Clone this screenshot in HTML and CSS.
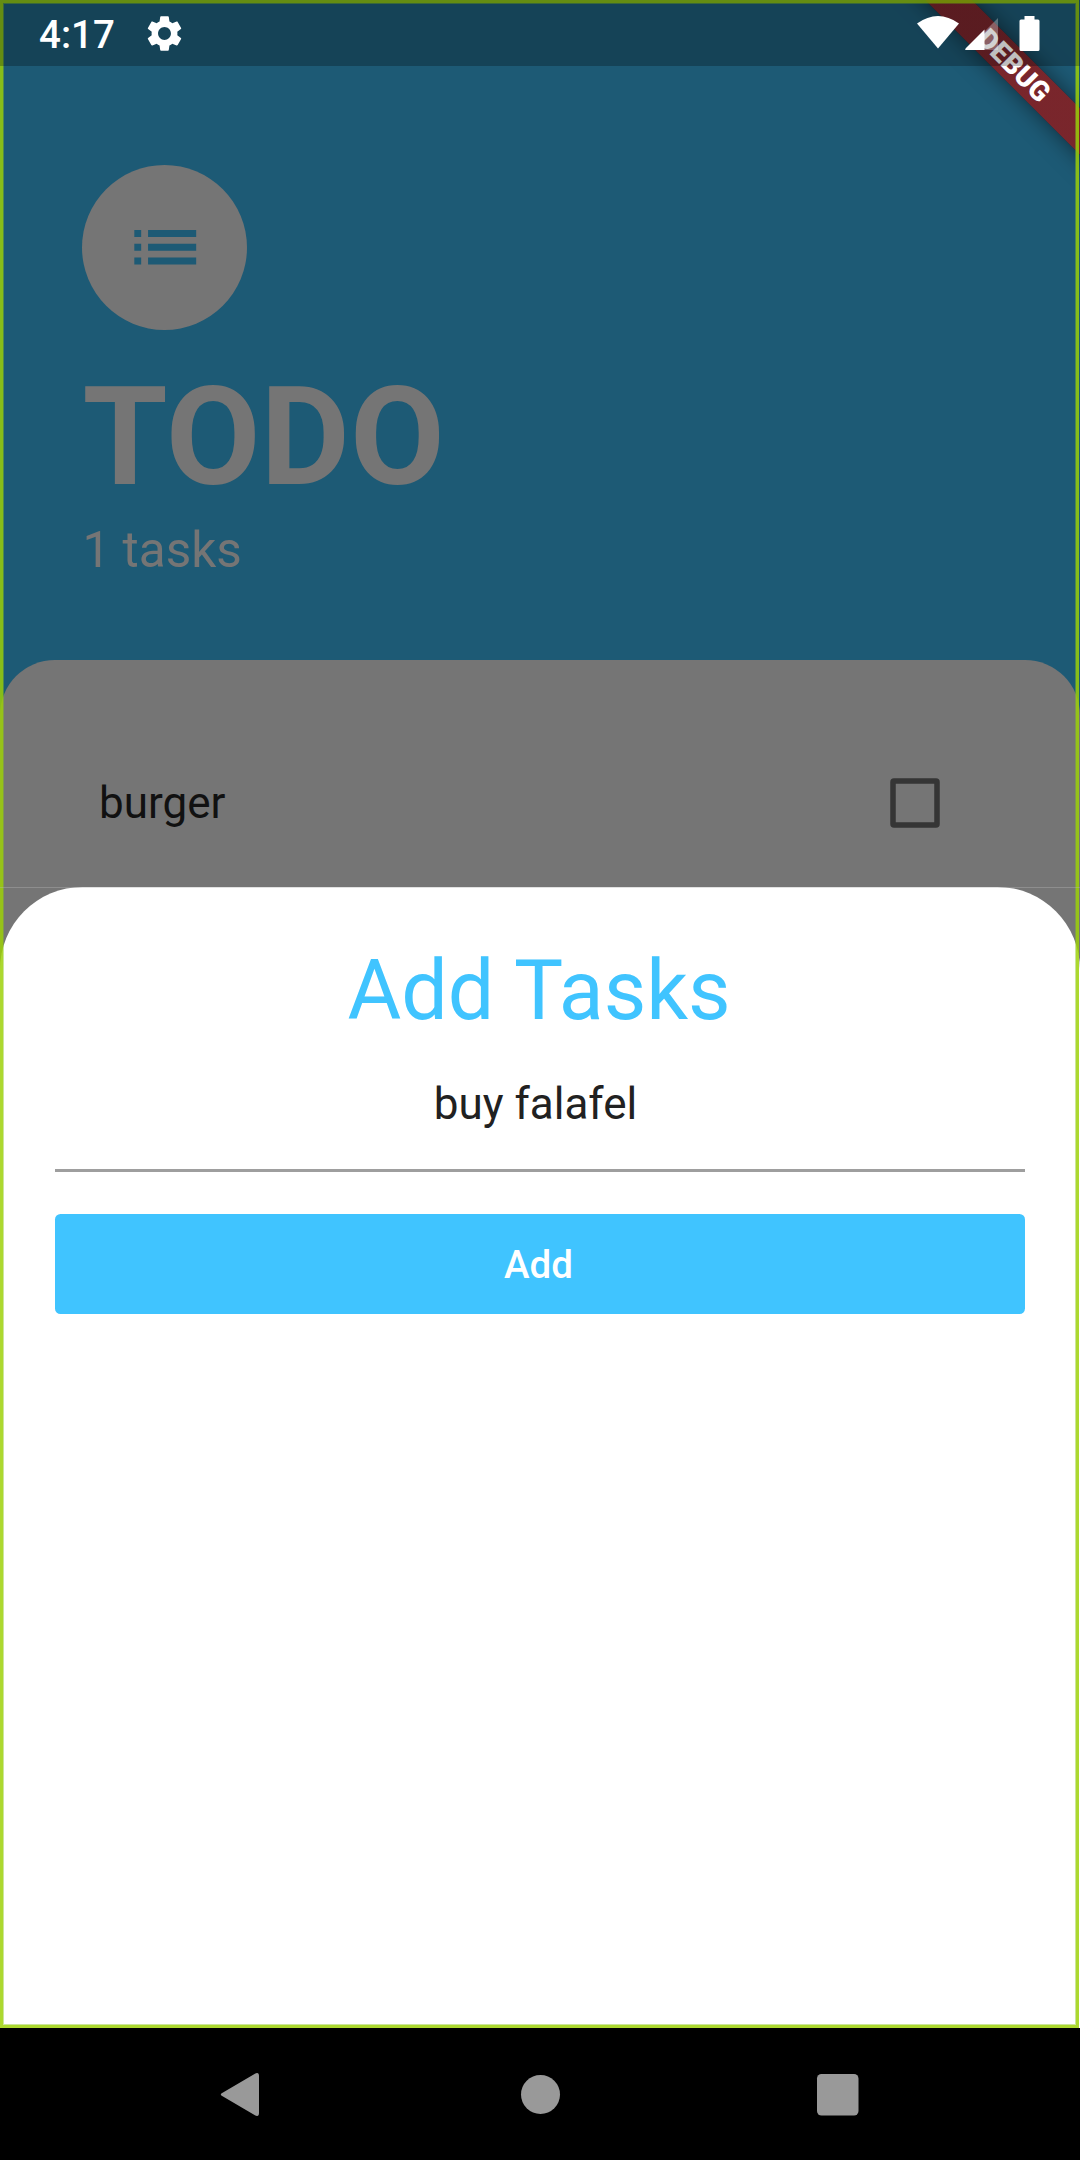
FILE: index.html
```html
<!DOCTYPE html>
<html lang="en">
<head>
<meta charset="utf-8">
<title>TODO</title>
<link rel="stylesheet" href="styles.css">
</head>
<body>
<div class="phone">
  <div class="app">
    <header class="header">
      <div class="avatar">
        <svg class="list-icon" viewBox="0 0 24 24"><path d="M3 13h2v-2H3v2zm0 4h2v-2H3v2zm0-8h2V7H3v2zm4 4h14v-2H7v2zm0 4h14v-2H7v2zM7 7v2h14V7H7z"/></svg>
      </div>
      <h1 class="title">TODO</h1>
      <p class="count">1 tasks</p>
    </header>
    <main class="list">
      <div class="task"><span class="task-name">burger</span><svg class="checkbox" viewBox="0 0 50 50"><rect x="3" y="3" width="44" height="44" rx="1"/></svg></div>
    </main>
    <section class="sheet">
      <h2 class="sheet-title">Add Tasks</h2>
      <div class="field">buy falafel</div>
      <button class="add">Add</button>
    </section>
    <div class="ribbon-clip"><div class="ribbon">DEBUG</div></div>
    <div class="frame"></div>
    <div class="status">
      <span class="clock">4:17</span>
      <svg class="gear" viewBox="0 0 24 24"><path d="M19.14 12.94c.04-.3.06-.61.06-.94 0-.32-.02-.64-.07-.94l2.03-1.58c.18-.14.23-.41.12-.61l-1.92-3.32c-.12-.22-.37-.29-.59-.22l-2.39.96c-.5-.38-1.03-.7-1.62-.94L14.4 2.81c-.04-.24-.24-.41-.48-.41h-3.84c-.24 0-.43.17-.47.41l-.36 2.54c-.59.24-1.13.57-1.62.94l-2.39-.96c-.22-.08-.47 0-.59.22L2.74 8.87c-.12.21-.08.47.12.61l2.03 1.58c-.05.3-.09.63-.09.94s.02.64.07.94l-2.03 1.58c-.18.14-.23.41-.12.61l1.92 3.32c.12.22.37.29.59.22l2.39-.96c.5.38 1.03.7 1.62.94l.36 2.54c.05.24.24.41.48.41h3.84c.24 0 .44-.17.47-.41l.36-2.54c.59-.24 1.13-.56 1.62-.94l2.39.96c.22.08.47 0 .59-.22l1.92-3.32c.12-.22.07-.47-.12-.61l-2.01-1.58zM12 15.6c-1.98 0-3.6-1.62-3.6-3.6s1.62-3.6 3.6-3.6 3.6 1.62 3.6 3.6-1.62 3.6-3.6 3.6z"/></svg>
      <svg class="indicators" viewBox="0 0 124 36"><path d="M0 7.500Q21-7.500 42 7.500L21 32.500Z"/><path d="M81 2V34H49Z" opacity=".3"/><path d="M67.500 13.500V34H49.500Q47 34 49 32Z"/><path d="M107.500 0H117.500V3.500H121Q122.500 3.500 122.500 5V33.500Q122.500 35 121 35H104Q102.500 35 102.500 33.500V5Q102.500 3.500 104 3.500H107.500Z"/></svg>
    </div>
  </div>
  <nav class="nav">
    <svg class="nav-icons" viewBox="0 0 1080 132"><path d="M223 64.500 254.500 46Q259 43.500 259 48V85Q259 89.500 254.500 87L223 68.500Q218.500 66.500 223 64.500Z"/><circle cx="540.500" cy="66.500" r="19.500"/><rect x="817" y="46" width="41.500" height="41.500" rx="4.500"/></svg>
  </nav>
</div>
</body>
</html>
```
FILE: styles.css
```css
* { box-sizing: border-box; }
body { margin: 0; font-family: Roboto, sans-serif; }
.phone { width: 1080px; height: 2160px; display: flex; flex-direction: column; background: #000; overflow: hidden; }
.app { position: relative; height: 2028px; display: flex; flex-direction: column; background: #1d5a75; overflow: hidden; }
.header { height: 660px; padding: 165px 82.5px 0; color: #757575; }
.avatar { width: 165px; height: 165px; margin-left: -.1px; border-radius: 50%; background: #757575; display: flex; align-items: center; justify-content: center; }
.list-icon { width: 82.5px; height: 82.5px; fill: #1d5a75; }
.title { margin: 27px 0 0; font-size: 137.5px; line-height: 161px; font-weight: 700; }
.count { margin: 0; padding-top: 3px; font-size: 49.5px; line-height: 58px; }
.list { flex: 1; background: #757575; border-radius: 55px 55px 0 0; padding: 66px 140px 0 99px; }
.task { height: 154px; display: flex; align-items: center; justify-content: space-between; }
.task-name { font-size: 44px; color: #111; }
.checkbox { width: 50px; height: 50px; fill: none; stroke: #353535; stroke-width: 5.5px; }
.sheet { position: absolute; inset: 887px 0 0; background: #fff; border-radius: 82.5px 82.5px 0 0; padding: 55px 55px 0; display: flex; flex-direction: column; }
.app::after { content: ""; position: absolute; inset: 887px 0 auto; height: 1px; background: rgb(180 180 180 / .4); }
.sheet-title { margin: 0; padding-right: 2px; font-size: 82.5px; line-height: 97px; font-weight: 400; word-spacing: 1px; text-align: center; color: #40c4ff; }
.field { height: 133px; border-bottom: 3px solid #9e9e9e; padding: 39px 9px 0 0; text-align: center; font-size: 44px; line-height: 52px; color: #212121; }
.add { margin: 42px 0 0; padding: 1px 3px 0 0; height: 99.5px; flex: none; border: 0; border-radius: 5.5px; background: #40c4ff; color: #fff; font: 500 38.5px/45px Roboto, sans-serif; }
.frame { position: absolute; inset: 0 1px 0 0; border: 3px solid rgb(156 208 7 / .84); box-shadow: inset 0 0 0 1px rgb(140 200 30 / .45); }
.ribbon-clip { position: absolute; inset: 0; overflow: hidden; }
.ribbon { position: absolute; left: 864px; top: 48.5px; width: 300px; height: 33px; background: linear-gradient(rgb(183 28 28 / .627), rgb(183 28 28 / .627)), rgb(0 0 0 / .4); box-shadow: 0 0 22px rgb(0 0 0 / .5); color: #fff; font-size: 28px; line-height: 33px; font-weight: 900; text-align: center; transform: rotate(45deg); }
.status { position: absolute; inset: 0 0 auto; height: 66px; background: rgb(0 0 0 / .25); display: flex; align-items: center; color: #fff; padding: 1px 39.5px 0 39px; fill: #fff; }
.clock { font-size: 38.5px; font-weight: 500; padding-top: 1px; }
.gear { width: 43px; height: 43px; margin-left: 28px; }
.indicators { width: 124px; height: 36px; margin-left: auto; }
.nav { height: 132px; }
.nav-icons { display: block; width: 1080px; height: 132px; fill: #999; }
```
